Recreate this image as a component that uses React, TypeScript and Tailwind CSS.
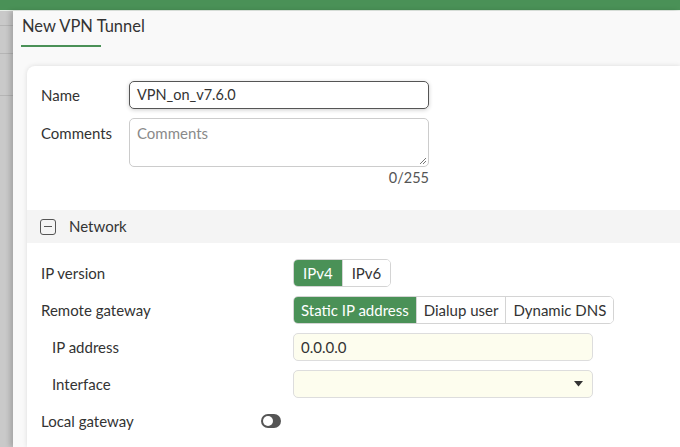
import React from 'react';

const Label = ({ children, indent = false }: { children: React.ReactNode; indent?: boolean }) => (
  <div className={`w-[252px] shrink-0 text-[15px] text-[#333] ${indent ? 'pl-[11px]' : ''}`}>{children}</div>
);

const Segmented = ({ items, active, wide = false }: { items: string[]; active: number; wide?: boolean }) => (
  <div className="flex h-[28px] rounded-[5px] border border-[#d4d4d4] overflow-hidden text-[15px]">
    {items.map((it, i) => (
      <div
        key={it}
        className={`flex items-center ${wide ? 'px-[9px]' : 'px-[7px]'} ${i > 0 ? 'border-l border-[#d4d4d4]' : ''} ${
          i === active ? 'bg-[#4a9157] text-white' : 'bg-white text-[#333]'
        }`}
      >
        {it}
      </div>
    ))}
  </div>
);

export default function App() {
  return (
    <div className="w-[680px] h-[447px] overflow-hidden flex flex-col bg-[#c8c8c8] font-['Lato','Liberation_Sans',sans-serif]">
      <div className="h-[11px] shrink-0 bg-[#4a9157] border-b border-[#e8efe9]" />
      <div className="flex flex-1 min-h-0">
        {/* background page behind the dialog */}
        <div className="w-[13px] shrink-0 bg-[#c9c9c9] flex flex-col">
          <div className="h-[15px] border-b border-[#b5b5b5]" />
          <div className="h-[28px] border-b border-[#b5b5b5]" />
          <div className="h-[42px] border-b border-[#b5b5b5]" />
        </div>
        <div className="flex-1 flex flex-col bg-[#f9f9f9] shadow-[-3px_0_5px_rgba(0,0,0,0.18)]">
          <div className="h-[55px] shrink-0 pl-[8px] pt-[3px]">
            <div className="inline-block">
              <div className="text-[16.5px] text-[#333] px-[1px] leading-[22px]">New VPN Tunnel</div>
              <div className="mt-[8px] h-[2px] w-[80px] bg-[#4a9157]" />
            </div>
          </div>
          <div className="flex-1 ml-[14px] bg-white rounded-tl-[8px] shadow-[0_0_5px_rgba(0,0,0,0.12)]">
            <div className="pl-[14px] pt-[15px]">
              <div className="flex items-center h-[28px]">
                <div className="w-[88px] shrink-0 text-[15px] text-[#333]">Name</div>
                <div className="w-[300px] h-[28px] rounded-[5px] border border-[#555] shadow-[0_1px_4px_rgba(0,0,0,0.2)] flex items-center px-[7px] text-[14.5px] text-[#333]">
                  VPN_on_v7.6.0
                </div>
              </div>
              <div className="flex mt-[9px]">
                <div className="w-[88px] shrink-0 text-[15px] text-[#333] pt-[4px]">Comments</div>
                <div className="w-[300px] flex flex-col">
                  <div className="relative h-[49px] rounded-[5px] border border-[#ccc] px-[7px] pt-[3px] text-[15px] text-[#8a8a8a]">
                    Comments
                    <svg className="absolute right-[1px] bottom-[1px]" width="8" height="8" viewBox="0 0 8 8">
                      <path d="M1 7L7 1M4 7L7 4" stroke="#777" strokeWidth="1" />
                    </svg>
                  </div>
                  <div className="text-right text-[14.5px] text-[#555] leading-[20px] mt-[1px]">0/255</div>
                </div>
              </div>
            </div>
            <div className="mt-[22px] h-[33px] bg-[#f4f4f4] flex items-center pl-[13px]">
              <div className="w-[16px] h-[16px] rounded-[3px] border border-[#555] flex items-center justify-center">
                <div className="w-[8px] h-[1.5px] bg-[#555]" />
              </div>
              <div className="ml-[13px] text-[15px] text-[#333]">Network</div>
            </div>
            <div className="pl-[14px] pt-[16px] flex flex-col gap-[9px]">
              <div className="flex items-center h-[28px]">
                <Label>IP version</Label>
                <Segmented items={['IPv4', 'IPv6']} active={0} wide />
              </div>
              <div className="flex items-center h-[28px]">
                <Label>Remote gateway</Label>
                <Segmented items={['Static IP address', 'Dialup user', 'Dynamic DNS']} active={0} />
              </div>
              <div className="flex items-center h-[28px]">
                <Label indent>IP address</Label>
                <div className="w-[300px] h-[28px] rounded-[5px] border border-[#ddd] bg-[#fdfdee] flex items-center px-[7px] text-[15px] text-[#333]">
                  0.0.0.0
                </div>
              </div>
              <div className="flex items-center h-[28px]">
                <Label indent>Interface</Label>
                <div className="w-[300px] h-[28px] rounded-[5px] border border-[#ddd] bg-[#fdfdee] flex items-center justify-end pr-[9px]">
                  <svg width="9" height="6" viewBox="0 0 9 6">
                    <path d="M0 0H9L4.5 5.5Z" fill="#333" />
                  </svg>
                </div>
              </div>
              <div className="flex items-center h-[28px]">
                <div className="w-[220px] shrink-0 text-[15px] text-[#333]">Local gateway</div>
                <div className="w-[20px] h-[14px] rounded-full bg-[#555] flex items-center pl-[2px]">
                  <div className="w-[10px] h-[10px] rounded-full bg-white" />
                </div>
              </div>
            </div>
          </div>
        </div>
      </div>
    </div>
  );
}
